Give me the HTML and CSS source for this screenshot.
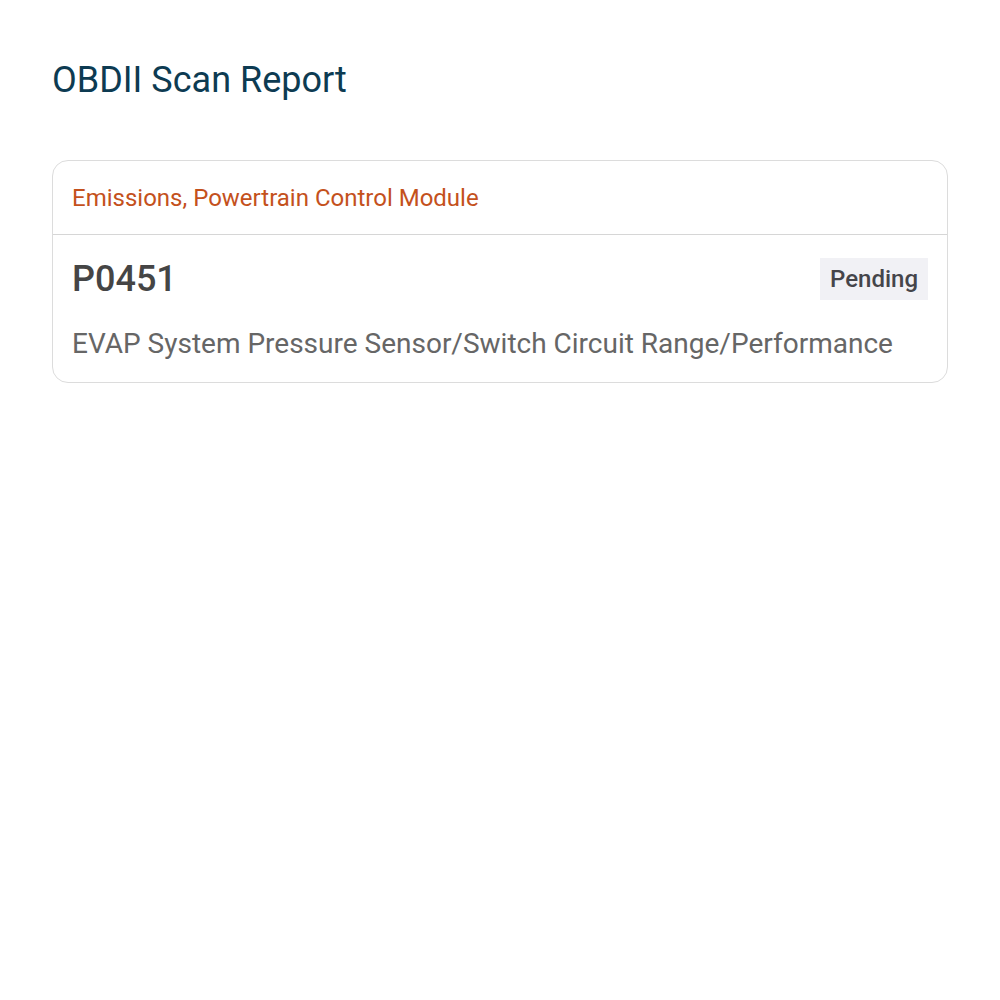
FILE: index.html
```html
<!DOCTYPE html>
<html lang="en">
<head>
    <meta charset="UTF-8">
    <meta name="viewport" content="width=device-width, initial-scale=1.0">
    <link rel="stylesheet" href="styles.css">
    <title>OBDII Scan Report</title>
</head>
<body>

<div class="report">
    <h1 class="report-title">OBDII Scan Report</h1>

    <div class="card">
        <div class="card-header">Emissions, Powertrain Control Module</div>
        <div class="card-body">
            <div class="code-row">
                <span class="code">P0451</span>
                <span class="status">Pending</span>
            </div>
            <p class="description">EVAP System Pressure Sensor/Switch Circuit Range/Performance</p>
        </div>
    </div>
</div>

</body>
</html>
```

FILE: styles.css
```css
body {
    margin: 0;
    background-color: #fff;
    font-family: Roboto, "Liberation Sans", sans-serif;
}

.report {
    padding: 52px 52px;
}

.report-title {
    margin: 6px 0 0;
    font-size: 36px;
    font-weight: 400;
    line-height: 44px;
    color: #0d3b52;
}

.card {
    margin-top: 58px;
    border: 1px solid #dcdcdc;
    border-radius: 16px;
}

.card-header {
    padding: 0 19px;
    height: 73px;
    display: flex;
    align-items: center;
    font-size: 24px;
    color: #c4511c;
    border-bottom: 1px solid #d6d6d6;
}

.card-body {
    padding: 23px 19px 21px;
}

.code-row {
    display: flex;
    justify-content: space-between;
    align-items: center;
}

.code {
    font-size: 36px;
    font-weight: 500;
    color: #454545;
}

.status {
    background-color: #f1f1f5;
    padding: 7px 10px;
    font-size: 24px;
    font-weight: 500;
    color: #45454a;
}

.description {
    margin: 27px 0 0;
    font-size: 28px;
    line-height: 34px;
    color: #666;
}
```
